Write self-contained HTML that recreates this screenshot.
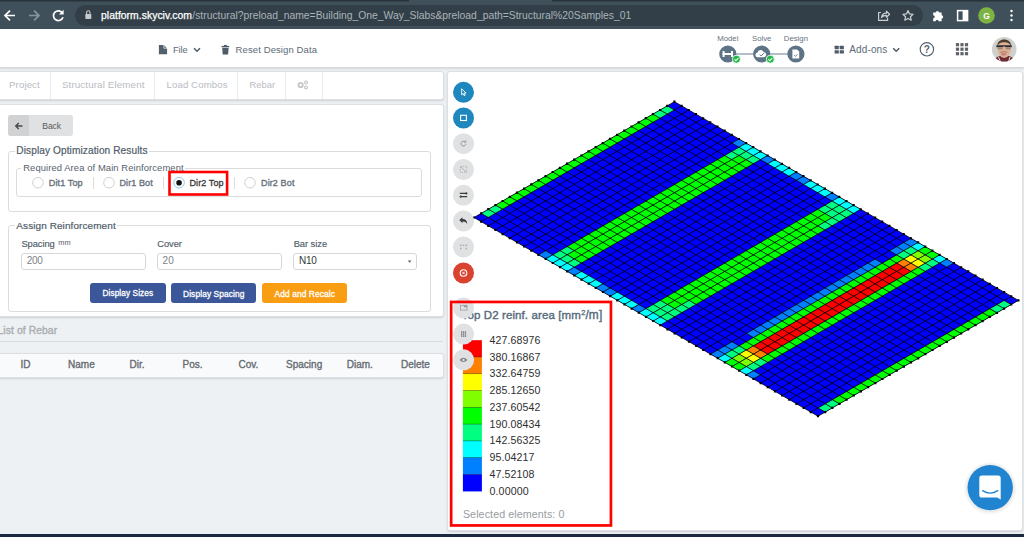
<!DOCTYPE html>
<html lang="en"><head><meta charset="utf-8"><title>SkyCiv Structural 3D</title>
<style>
html,body{margin:0;padding:0}
body{width:1024px;height:537px;overflow:hidden;position:relative;background:#eef1f4;font-family:"Liberation Sans",sans-serif;}
.t{position:absolute;white-space:nowrap;display:block}
.a{position:absolute;box-sizing:border-box}
.card{position:absolute;box-sizing:border-box;background:#fff;border:1px solid #dde0e3;border-radius:3px;box-shadow:0 1px 2px rgba(34,36,38,.15)}
.fs{position:absolute;box-sizing:border-box;border:1px solid #dcdcdc;border-radius:3px}
.lg{position:absolute;background:#fff}
.inp{position:absolute;box-sizing:border-box;border:1px solid #d6d7d8;border-radius:3px;background:#fff}
.btn{position:absolute;box-sizing:border-box;border-radius:3px}
.cb{position:absolute;width:21px;height:21px;border-radius:50%;box-sizing:border-box}
.rad{position:absolute;width:11.5px;height:11.5px;border-radius:50%;box-sizing:border-box;border:1px solid #d0d1d2;background:#fff}
svg{position:absolute;overflow:visible}
</style></head><body>

<div class="a" style="left:0;top:0;width:1024px;height:29px;background:#40505b"></div>
<svg style="left:0;top:0" width="1024" height="2" viewBox="0 0 1024 2"><rect x="0" y="0" width="409" height="1.500" fill="#27323a"/><rect x="552" y="0" width="472" height="1.500" fill="#27323a"/></svg>
<div class="a" style="left:75px;top:5px;width:848px;height:21px;border-radius:10.5px;background:#323f48"></div>
<svg style="left:0;top:0" width="1024" height="29" viewBox="0 0 1024 29">
<g fill="none" stroke="#fff" stroke-width="1.7" stroke-linecap="butt" stroke-linejoin="miter">
<path d="M15 15.5H5.5M10 10.6L5 15.5L10 20.4"/>
<path d="M29 15.5H38.5M34 10.6L39 15.5L34 20.4" stroke="#8a959c"/>
<path d="M62.6 13.2A4.9 4.9 0 1 0 63 17.3" />
</g>
<path d="M63.6 9.8V14.4H59z" fill="#fff"/>
<g fill="#c3c9cd"><rect x="85.3" y="14" width="6" height="5" rx="0.8"/></g>
<path d="M86.6 14v-1.6a1.7 1.7 0 0 1 3.4 0V14" fill="none" stroke="#c3c9cd" stroke-width="1.1"/>
<!-- share -->
<g fill="none" stroke="#c9cfd3" stroke-width="1.2" stroke-linejoin="round" stroke-linecap="round">
<path d="M880.5 12.5H878.6V20.4H887.6V18.2"/>
<path d="M881.5 17.5C882 14.6 884 13.3 886.4 13.2V11.2L889.6 14.2L886.4 17.2V15.3C884.3 15.3 882.7 16 881.5 17.5z"/>
<path d="M908 10.6L909.5 13.9L913.1 14.3L910.4 16.7L911.2 20.2L908 18.4L904.8 20.2L905.6 16.7L902.9 14.3L906.5 13.9z"/>
</g>
<!-- puzzle -->
<path d="M933.2 12.6h2.6a1.6 1.6 0 1 1 3.2 0h2.6v2.7a1.6 1.6 0 1 1 0 3.2v2.7h-3a1.5 1.5 0 1 0-3 0h-2.4v-2.9a1.5 1.5 0 1 0 0-3z" fill="#fff"/>
<!-- split -->
<rect x="957.6" y="10.6" width="10" height="10" fill="none" stroke="#fff" stroke-width="1.5"/>
<rect x="962.6" y="10.6" width="5" height="10" fill="#fff"/>
<circle cx="986.5" cy="15.5" r="8.3" fill="#7cb342"/>
<g fill="#fff"><circle cx="1011.5" cy="11" r="1.2"/><circle cx="1011.5" cy="15.5" r="1.2"/><circle cx="1011.5" cy="20" r="1.2"/></g>
</svg>
<span class="t" style="left:101.00px;top:8.50px;font-size:10.37px;line-height:14px;color:#ffffff;-webkit-text-stroke:0.25px #ffffff;letter-spacing:0.045px;">platform.skyciv.com</span>
<span class="t" style="left:192.30px;top:8.50px;font-size:10.37px;line-height:14px;color:#aab3b9;letter-spacing:-0.007px;">/structural?preload_name=Building_One_Way_Slabs&amp;preload_path=Structural%20Samples_01</span>
<span class="t" style="left:986.50px;top:8.70px;font-size:8.50px;line-height:14px;color:#fff;font-weight:700;transform:translateX(-50%);">G</span>
<div class="a" style="left:0;top:29px;width:1024px;height:39px;background:#fff;border-bottom:1px solid #d5d9dd;box-shadow:0 1px 2px rgba(0,0,0,.10)"></div>
<svg style="left:0;top:29px" width="1024" height="40" viewBox="0 29 1024 40">
<!-- file icon -->
<path d="M158.900 44.900h4.800l3.400 3.400v5.900h-8.200z" fill="#52616d"/><path d="M163.900 44.700v3.500h3.500" fill="none" stroke="#fff" stroke-width="0.700"/>
<path d="M194 48.3l3 3l3-3" fill="none" stroke="#4d5c68" stroke-width="1.5"/>
<!-- trash -->
<path d="M222.2 47.8h6.4l-.5 6.6h-5.4z" fill="#4d5c68"/><rect x="221.6" y="45.9" width="7.6" height="1.3" fill="#4d5c68"/><rect x="224" y="44.9" width="2.8" height="1.2" fill="#4d5c68"/>
<!-- model/solve/design -->
<path d="M728 54H796" stroke="#6b8193" stroke-width="1.2"/>
<g fill="#5d7486"><circle cx="727.8" cy="54" r="8.6"/><circle cx="761.7" cy="54" r="8.6"/><circle cx="795.9" cy="54" r="8.6"/></g>
<g fill="#fff">
<rect x="722.6" y="53" width="10.4" height="2" /><rect x="722.6" y="51" width="2" height="6"/><rect x="731" y="51" width="2" height="6"/>
<path d="M757.2 57.2a2.4 2.4 0 0 1 .3-4.7a3.2 3.2 0 0 1 6.1-.6a2.7 2.7 0 0 1 .6 5.3z"/>
<path d="M792.4 49.4h4.6l2.2 2.2v7h-6.8z"/>
</g>
<path d="M759.8 54.6l1.4 1.4l2.6-2.8" fill="none" stroke="#5d7486" stroke-width="1"/>
<path d="M794.3 55.2l1.2 1.2l2-2.2" fill="none" stroke="#5d7486" stroke-width="0.9"/>
<g><circle cx="736.4" cy="59.2" r="4" fill="#21ba45" stroke="#fff" stroke-width="0.8"/><circle cx="770.3" cy="59.2" r="4" fill="#21ba45" stroke="#fff" stroke-width="0.8"/>
<path d="M734.5 59.3l1.4 1.4l2.5-2.7M768.4 59.3l1.4 1.4l2.5-2.7" fill="none" stroke="#fff" stroke-width="1.1"/></g>
<!-- addons -->
<g fill="#4d5c68"><rect x="834.600" y="45.800" width="4.200" height="3.400" rx=".4"/><rect x="839.700" y="45.800" width="4.200" height="3.400" rx=".4"/><rect x="834.600" y="50.200" width="4.200" height="3.400" rx=".4"/><rect x="839.700" y="50.200" width="4.200" height="3.400" rx=".4"/></g>
<path d="M893.2 48.3l3 3l3-3" fill="none" stroke="#4d5c68" stroke-width="1.5"/>
<circle cx="926.9" cy="49.3" r="6.700" fill="none" stroke="#55636f" stroke-width="1.200"/>
<g fill="#5f6368">
<rect x="955.9" y="43.1" width="3.200" height="3.200"/><rect x="960.4" y="43.1" width="3.200" height="3.200"/><rect x="964.9" y="43.1" width="3.200" height="3.200"/><rect x="955.9" y="47.6" width="3.200" height="3.200"/><rect x="960.4" y="47.6" width="3.200" height="3.200"/><rect x="964.9" y="47.6" width="3.200" height="3.200"/><rect x="955.9" y="52.1" width="3.200" height="3.200"/><rect x="960.4" y="52.1" width="3.200" height="3.200"/><rect x="964.9" y="52.1" width="3.200" height="3.200"/>
</g>
<!-- avatar -->
<clipPath id="av"><circle cx="1004.2" cy="49.2" r="12.3"/></clipPath>
<g clip-path="url(#av)"><rect x="990" y="36" width="30" height="28" fill="#cdd0cc"/>
<path d="M993 64q1-7 7-8h8.600q6 1 7 8z" fill="#6e2b36"/>
<path d="M998.500 57l2.500 6M1010 57l-2 6" stroke="#e8e0dc" stroke-width="1"/>
<ellipse cx="1004.2" cy="48.6" rx="6.700" ry="9.300" fill="#dcb194"/>
<path d="M997.300 46.500c-.8-9.500 14.600-9.500 13.800 0c-1.200-5.600-12.600-5.600-13.800 0z" fill="#4b3b31"/>
<path d="M996.400 45.300h15.400v1.900h-6.200l-.8-.8h-1.500l-.8.800h-6.100z" fill="#2b2a36"/>
<rect x="997.600" y="48.400" width="5" height=".8" fill="#4a4656" opacity=".7"/><rect x="1005.600" y="48.400" width="5" height=".8" fill="#4a4656" opacity=".7"/>
<ellipse cx="1003.600" cy="54.300" rx="2.700" ry="1.300" fill="#c77b82"/>
<path d="M1000.300 52.300q3.500-1.400 7 0" fill="none" stroke="#8a5f4c" stroke-width=".7"/>
</g>
</svg>
<span class="t" style="left:172.90px;top:42.50px;font-size:9.36px;line-height:14px;color:#5c6b77;letter-spacing:-0.054px;">File</span>
<span class="t" style="left:235.60px;top:42.50px;font-size:9.52px;line-height:14px;color:#5c6b77;letter-spacing:0.095px;">Reset Design Data</span>
<span class="t" style="left:727.80px;top:34.00px;font-size:7.80px;line-height:10px;color:#66737e;transform:translateX(-50%);">Model</span>
<span class="t" style="left:761.70px;top:34.00px;font-size:7.80px;line-height:10px;color:#66737e;transform:translateX(-50%);">Solve</span>
<span class="t" style="left:795.90px;top:34.00px;font-size:7.80px;line-height:10px;color:#66737e;transform:translateX(-50%);">Design</span>
<span class="t" style="left:849.30px;top:42.90px;font-size:10.04px;line-height:14px;color:#5c6b77;letter-spacing:0.104px;">Add-ons</span>
<span class="t" style="left:926.90px;top:42.70px;font-size:10.00px;line-height:14px;color:#55636f;font-weight:700;transform:translateX(-50%);">?</span>
<div class="card" style="left:-4px;top:71px;width:447.8px;height:29px"></div>
<div class="a" style="left:50.0px;top:72px;width:1px;height:27px;background:#e9eaeb"></div>
<div class="a" style="left:154.0px;top:72px;width:1px;height:27px;background:#e9eaeb"></div>
<div class="a" style="left:237.0px;top:72px;width:1px;height:27px;background:#e9eaeb"></div>
<div class="a" style="left:285.0px;top:72px;width:1px;height:27px;background:#e9eaeb"></div>
<div class="a" style="left:322.0px;top:72px;width:1px;height:27px;background:#e9eaeb"></div>
<span class="t" style="left:9.10px;top:78.00px;font-size:9.65px;line-height:14px;color:#b9bcbf;letter-spacing:0.105px;">Project</span>
<span class="t" style="left:61.90px;top:78.00px;font-size:9.85px;line-height:14px;color:#b9bcbf;letter-spacing:0.095px;">Structural Element</span>
<span class="t" style="left:166.50px;top:78.00px;font-size:9.65px;line-height:14px;color:#b9bcbf;letter-spacing:0.106px;">Load Combos</span>
<span class="t" style="left:249.50px;top:78.00px;font-size:9.36px;line-height:14px;color:#b9bcbf;letter-spacing:0.012px;">Rebar</span>
<svg style="left:297px;top:80px" width="12" height="10" viewBox="0 0 12 10"><g fill="#c4c6c9"><circle cx="3.6" cy="5" r="3.1"/><circle cx="9" cy="2.6" r="2"/><circle cx="9" cy="7.4" r="2"/></g><g fill="#fff"><circle cx="3.6" cy="5" r="1.2"/><circle cx="9" cy="2.6" r=".8"/><circle cx="9" cy="7.400" r=".8"/></g></svg>
<div class="card" style="left:-4px;top:103.9px;width:447.8px;height:213px"></div>
<div class="btn" style="left:8px;top:115px;width:65px;height:21px;background:#e0e1e2"></div>
<div class="btn" style="left:8px;top:115px;width:21px;height:21px;background:#d1d2d3;border-radius:3px 0 0 3px"></div>
<svg style="left:13.6px;top:120.6px" width="10" height="10" viewBox="0 0 10 10"><path d="M8.5 5H2M4.800 2L1.800 5L4.800 8" fill="none" stroke="#4a4a4a" stroke-width="1.5"/></svg>
<span class="t" style="left:42.20px;top:118.70px;font-size:8.64px;line-height:14px;color:#5a5a5a;letter-spacing:-0.062px;">Back</span>
<div class="fs" style="left:8px;top:151px;width:423px;height:61px"></div>
<div class="lg" style="left:15px;top:145px;width:134px;height:12px"></div>
<span class="t" style="left:16.30px;top:144.30px;font-size:10.11px;line-height:14px;color:#4f5d6a;-webkit-text-stroke:0.20px #4f5d6a;letter-spacing:0.101px;">Display Optimization Results</span>
<div class="fs" style="left:16px;top:168px;width:405.5px;height:28.5px"></div>
<div class="lg" style="left:21px;top:163px;width:164px;height:10px"></div>
<span class="t" style="left:23.20px;top:160.80px;font-size:9.41px;line-height:14px;color:#56626d;letter-spacing:0.089px;">Required Area of Main Reinforcement</span>
<svg style="left:0;top:0" width="1024" height="537" viewBox="0 0 1024 537"><circle cx="38.00" cy="182.700" r="5.300" fill="#fff" stroke="#d0d1d2" stroke-width="1"/></svg>
<span class="t" style="left:48.70px;top:176.20px;font-size:9.13px;line-height:14px;color:#69737c;-webkit-text-stroke:0.35px #69737c;letter-spacing:0.098px;">Dit1 Top</span>
<div class="a" style="left:93px;top:177px;width:1px;height:12px;background:#dcdcdc"></div>
<svg style="left:0;top:0" width="1024" height="537" viewBox="0 0 1024 537"><circle cx="109.00" cy="182.700" r="5.300" fill="#fff" stroke="#d0d1d2" stroke-width="1"/></svg>
<span class="t" style="left:119.50px;top:176.20px;font-size:9.00px;line-height:14px;color:#69737c;-webkit-text-stroke:0.35px #69737c;letter-spacing:0.098px;">Dir1 Bot</span>
<div class="a" style="left:163px;top:177px;width:1px;height:12px;background:#dcdcdc"></div>
<svg style="left:0;top:0" width="1024" height="537" viewBox="0 0 1024 537"><circle cx="179.05" cy="182.700" r="5.300" fill="#fff" stroke="#96c8e6" stroke-width="1"/></svg>
<svg style="left:0;top:0" width="1024" height="537" viewBox="0 0 1024 537"><circle cx="179.05" cy="182.700" r="2.800" fill="#111"/></svg>
<span class="t" style="left:189.50px;top:176.20px;font-size:8.99px;line-height:14px;color:#3a3a3a;-webkit-text-stroke:0.30px #3a3a3a;letter-spacing:0.100px;">Dir2 Top</span>
<div class="a" style="left:234px;top:177px;width:1px;height:12px;background:#dcdcdc"></div>
<svg style="left:0;top:0" width="1024" height="537" viewBox="0 0 1024 537"><circle cx="250.00" cy="182.700" r="5.300" fill="#fff" stroke="#d0d1d2" stroke-width="1"/></svg>
<span class="t" style="left:261.00px;top:176.20px;font-size:9.06px;line-height:14px;color:#69737c;-webkit-text-stroke:0.35px #69737c;letter-spacing:0.102px;">Dir2 Bot</span>
<svg style="left:0;top:0" width="1024" height="537" viewBox="0 0 1024 537"><rect x="169.5" y="172" width="57.6" height="22.5" fill="none" stroke="#ff0000" stroke-width="2.6"/></svg>
<div class="fs" style="left:8px;top:225px;width:423px;height:87px"></div>
<div class="lg" style="left:15px;top:219px;width:102px;height:12px"></div>
<span class="t" style="left:16.30px;top:218.50px;font-size:9.97px;line-height:14px;color:#4f5d6a;-webkit-text-stroke:0.20px #4f5d6a;letter-spacing:0.098px;">Assign Reinforcement</span>
<span class="t" style="left:21.40px;top:237.30px;font-size:9.36px;line-height:14px;color:#4f5d6a;-webkit-text-stroke:0.15px #4f5d6a;letter-spacing:-0.064px;">Spacing</span>
<span class="t" style="left:58.30px;top:238.50px;font-size:7.33px;line-height:8px;color:#4f5d6a;letter-spacing:0.081px;">mm</span>
<span class="t" style="left:157.30px;top:237.30px;font-size:9.36px;line-height:14px;color:#4f5d6a;-webkit-text-stroke:0.15px #4f5d6a;letter-spacing:-0.084px;">Cover</span>
<span class="t" style="left:293.70px;top:237.30px;font-size:9.36px;line-height:14px;color:#4f5d6a;-webkit-text-stroke:0.15px #4f5d6a;letter-spacing:-0.052px;">Bar size</span>
<div class="inp" style="left:21.4px;top:253.1px;width:124.3px;height:17.2px"></div>
<div class="inp" style="left:157.3px;top:253.1px;width:124.7px;height:17.2px"></div>
<div class="inp" style="left:293.4px;top:253.1px;width:123.9px;height:17.2px"></div>
<span class="t" style="left:26.70px;top:254.40px;font-size:10.00px;line-height:14px;color:#7d8186;letter-spacing:-0.244px;">200</span>
<span class="t" style="left:162.60px;top:254.40px;font-size:10.00px;line-height:14px;color:#7d8186;letter-spacing:0.075px;">20</span>
<span class="t" style="left:299.00px;top:254.10px;font-size:10.00px;line-height:14px;color:#363636;letter-spacing:-0.280px;">N10</span>
<svg style="left:407.2px;top:260.2px" width="5.2" height="3.2" viewBox="0 0 6 4"><path d="M.6.600h4.800L3 3.400z" fill="#666"/></svg>
<div class="btn" style="left:90px;top:282.6px;width:75.7px;height:20.9px;background:#3b5699"></div>
<div class="btn" style="left:170.500px;top:282.6px;width:85.7px;height:20.9px;background:#3b5699"></div>
<div class="btn" style="left:262.300px;top:282.6px;width:85px;height:20.9px;background:#f99d12"></div>
<span class="t" style="left:102.50px;top:286.50px;font-size:8.23px;line-height:14px;color:#fff;-webkit-text-stroke:0.30px #fff;letter-spacing:0.105px;">Display Sizes</span>
<span class="t" style="left:183.00px;top:286.50px;font-size:8.39px;line-height:14px;color:#fff;-webkit-text-stroke:0.30px #fff;letter-spacing:0.103px;">Display Spacing</span>
<span class="t" style="left:274.50px;top:286.50px;font-size:8.40px;line-height:14px;color:#fff;-webkit-text-stroke:0.30px #fff;letter-spacing:0.105px;">Add and Recalc</span>
<span class="t" style="left:-2.50px;top:324.20px;font-size:10.30px;line-height:14px;color:#a9adb1;-webkit-text-stroke:0.35px #a9adb1;letter-spacing:0.101px;">List of Rebar</span>
<div class="a" style="left:0;top:341px;width:443px;height:1px;background:#d8dadd"></div>
<div class="card" style="left:-4px;top:352.500px;width:447.5px;height:25px;border-radius:0 3px 3px 0;background:#f9fafb"></div>
<span class="t" style="left:25.60px;top:357.50px;font-size:10.00px;line-height:14px;color:#666c73;-webkit-text-stroke:0.35px #666c73;transform:translateX(-50%);">ID</span>
<span class="t" style="left:81.40px;top:357.50px;font-size:10.00px;line-height:14px;color:#666c73;-webkit-text-stroke:0.35px #666c73;transform:translateX(-50%);">Name</span>
<span class="t" style="left:137.10px;top:357.50px;font-size:10.00px;line-height:14px;color:#666c73;-webkit-text-stroke:0.35px #666c73;transform:translateX(-50%);">Dir.</span>
<span class="t" style="left:192.60px;top:357.50px;font-size:10.00px;line-height:14px;color:#666c73;-webkit-text-stroke:0.35px #666c73;transform:translateX(-50%);">Pos.</span>
<span class="t" style="left:248.35px;top:357.50px;font-size:10.00px;line-height:14px;color:#666c73;-webkit-text-stroke:0.35px #666c73;transform:translateX(-50%);">Cov.</span>
<span class="t" style="left:304.15px;top:357.50px;font-size:10.00px;line-height:14px;color:#666c73;-webkit-text-stroke:0.35px #666c73;transform:translateX(-50%);">Spacing</span>
<span class="t" style="left:359.75px;top:357.50px;font-size:10.00px;line-height:14px;color:#666c73;-webkit-text-stroke:0.35px #666c73;transform:translateX(-50%);">Diam.</span>
<span class="t" style="left:415.45px;top:357.50px;font-size:10.00px;line-height:14px;color:#666c73;-webkit-text-stroke:0.35px #666c73;transform:translateX(-50%);">Delete</span>
<div class="card" style="left:447.3px;top:71px;width:576.2px;height:459.5px"></div>
<svg style="left:0;top:0" width="1024" height="537" viewBox="0 0 1024 537" shape-rendering="auto">
<polygon points="674.4,101.7 1018.4,300.4 818.0,416.2 474.0,217.5" fill="#0000ff"/>
<polygon points="667.2,105.8 674.4,110.0 660.1,118.2 652.9,114.1" fill="#00ff80"/>
<polygon points="652.9,114.1 660.1,118.2 502.6,209.2 495.5,205.1" fill="#00ff00"/>
<polygon points="495.5,205.1 502.6,209.2 488.3,217.5 481.2,213.4" fill="#00ff80"/>
<polygon points="738.9,139.0 746.1,143.1 738.9,147.2 731.7,143.1" fill="#0080ff"/>
<polygon points="545.7,250.6 552.8,254.8 545.7,258.9 538.5,254.8" fill="#0080ff"/>
<polygon points="746.1,143.1 753.2,147.2 746.1,151.4 738.9,147.2" fill="#00ffff"/>
<polygon points="738.9,147.2 746.1,151.4 731.8,159.6 724.6,155.5" fill="#00ff80"/>
<polygon points="724.6,155.5 731.8,159.6 574.3,250.6 567.1,246.5" fill="#00ff00"/>
<polygon points="567.1,246.5 574.3,250.6 560.0,258.9 552.8,254.8" fill="#00ff80"/>
<polygon points="552.8,254.8 560.0,258.9 552.8,263.0 545.7,258.9" fill="#00ffff"/>
<polygon points="753.2,147.2 760.4,151.4 753.2,155.5 746.1,151.4" fill="#00ffff"/>
<polygon points="746.1,151.4 753.2,155.5 746.1,159.6 738.9,155.5" fill="#00ff80"/>
<polygon points="738.9,155.5 746.1,159.6 574.3,258.9 567.1,254.8" fill="#00ff00"/>
<polygon points="567.1,254.8 574.3,258.9 567.2,263.0 560.0,258.9" fill="#00ff80"/>
<polygon points="560.0,258.9 567.2,263.0 560.0,267.2 552.8,263.0" fill="#00ffff"/>
<polygon points="760.4,151.4 767.6,155.5 760.4,159.7 753.2,155.5" fill="#00ffff"/>
<polygon points="753.2,155.5 760.4,159.7 753.3,163.8 746.1,159.6" fill="#00ff80"/>
<polygon points="746.1,159.6 753.3,163.8 581.5,263.0 574.3,258.9" fill="#00ff00"/>
<polygon points="574.3,258.9 581.5,263.0 574.3,267.2 567.2,263.0" fill="#00ff80"/>
<polygon points="567.2,263.0 574.3,267.2 567.2,271.3 560.0,267.2" fill="#00ffff"/>
<polygon points="767.6,155.5 774.7,159.7 767.6,163.8 760.4,159.7" fill="#0080ff"/>
<polygon points="574.3,267.2 581.5,271.3 574.3,275.5 567.2,271.3" fill="#0080ff"/>
<polygon points="774.7,159.7 781.9,163.8 774.7,167.9 767.6,163.8" fill="#00ffff"/>
<polygon points="581.5,271.3 588.7,275.5 581.5,279.6 574.3,275.5" fill="#00ffff"/>
<polygon points="781.9,163.8 789.1,167.9 781.9,172.1 774.7,167.9" fill="#00ffff"/>
<polygon points="588.7,275.5 595.8,279.6 588.7,283.7 581.5,279.6" fill="#00ffff"/>
<polygon points="789.1,167.9 796.2,172.1 789.1,176.2 781.9,172.1" fill="#00ffff"/>
<polygon points="595.8,279.6 603.0,283.7 595.8,287.9 588.7,283.7" fill="#00ffff"/>
<polygon points="796.2,172.1 803.4,176.2 796.2,180.3 789.1,176.2" fill="#0080ff"/>
<polygon points="603.0,283.7 610.2,287.9 603.0,292.0 595.8,287.9" fill="#0080ff"/>
<polygon points="803.4,176.2 810.6,180.4 803.4,184.5 796.2,180.3" fill="#0080ff"/>
<polygon points="610.2,287.9 617.3,292.0 610.2,296.2 603.0,292.0" fill="#0080ff"/>
<polygon points="810.6,180.4 817.7,184.5 810.6,188.6 803.4,184.5" fill="#00ffff"/>
<polygon points="617.3,292.0 624.5,296.2 617.3,300.3 610.2,296.2" fill="#00ffff"/>
<polygon points="817.7,184.5 824.9,188.6 817.7,192.8 810.6,188.6" fill="#00ffff"/>
<polygon points="624.5,296.2 631.7,300.3 624.5,304.4 617.3,300.3" fill="#00ffff"/>
<polygon points="824.9,188.6 832.1,192.8 824.9,196.9 817.7,192.8" fill="#00ffff"/>
<polygon points="631.7,300.3 638.8,304.4 631.7,308.6 624.5,304.4" fill="#00ffff"/>
<polygon points="832.1,192.8 839.2,196.9 832.1,201.0 824.9,196.9" fill="#0080ff"/>
<polygon points="638.8,304.4 646.0,308.6 638.8,312.7 631.7,308.6" fill="#0080ff"/>
<polygon points="839.2,196.9 846.4,201.1 839.2,205.2 832.1,201.0" fill="#00ffff"/>
<polygon points="832.1,201.0 839.2,205.2 824.9,213.5 817.8,209.3" fill="#00ff80"/>
<polygon points="817.8,209.3 824.9,213.5 667.5,304.4 660.3,300.3" fill="#00ff00"/>
<polygon points="660.3,300.3 667.5,304.4 653.2,312.7 646.0,308.6" fill="#00ff80"/>
<polygon points="646.0,308.6 653.2,312.7 646.0,316.9 638.8,312.7" fill="#00ffff"/>
<polygon points="846.4,201.1 853.6,205.2 846.4,209.3 839.2,205.2" fill="#00ffff"/>
<polygon points="839.2,205.2 846.4,209.3 832.1,217.6 824.9,213.5" fill="#00ff80"/>
<polygon points="824.9,213.5 832.1,217.6 674.6,308.6 667.5,304.4" fill="#00ff00"/>
<polygon points="667.5,304.4 674.6,308.6 660.3,316.9 653.2,312.7" fill="#00ff80"/>
<polygon points="653.2,312.7 660.3,316.9 653.2,321.0 646.0,316.9" fill="#00ffff"/>
<polygon points="853.6,205.2 860.7,209.3 853.6,213.5 846.4,209.3" fill="#00ffff"/>
<polygon points="846.4,209.3 853.6,213.5 824.9,230.0 817.8,225.9" fill="#00ff80"/>
<polygon points="817.8,225.9 824.9,230.0 696.1,304.5 689.0,300.3" fill="#00ff00"/>
<polygon points="689.0,300.3 696.1,304.5 667.5,321.0 660.3,316.9" fill="#00ff80"/>
<polygon points="660.3,316.9 667.5,321.0 660.3,325.1 653.2,321.0" fill="#00ffff"/>
<polygon points="910.9,238.3 918.1,242.4 896.6,254.9 889.4,250.7" fill="#0080ff"/>
<polygon points="875.1,259.0 882.3,263.1 753.5,337.6 746.3,333.4" fill="#0080ff"/>
<polygon points="732.0,341.7 739.1,345.8 717.7,358.2 710.5,354.1" fill="#0080ff"/>
<polygon points="918.1,242.4 925.2,246.6 918.1,250.7 910.9,246.6" fill="#00ffff"/>
<polygon points="910.9,246.6 918.1,250.7 903.8,259.0 896.6,254.9" fill="#00ff80"/>
<polygon points="896.6,254.9 903.8,259.0 746.3,350.0 739.1,345.8" fill="#00ff00"/>
<polygon points="739.1,345.8 746.3,350.0 732.0,358.2 724.8,354.1" fill="#00ff80"/>
<polygon points="724.8,354.1 732.0,358.2 724.8,362.4 717.7,358.2" fill="#00ffff"/>
<polygon points="925.2,246.6 932.4,250.7 925.2,254.9 918.1,250.7" fill="#00ff00"/>
<polygon points="918.1,250.7 925.2,254.9 918.1,259.0 910.9,254.9" fill="#80ff00"/>
<polygon points="910.9,254.9 918.1,259.0 910.9,263.1 903.8,259.0" fill="#ffff00"/>
<polygon points="903.8,259.0 910.9,263.1 903.8,267.3 896.6,263.1" fill="#ff8000"/>
<polygon points="896.6,263.1 903.8,267.3 760.6,350.0 753.5,345.8" fill="#ff0000"/>
<polygon points="753.5,345.8 760.6,350.0 753.5,354.1 746.3,350.0" fill="#ff8000"/>
<polygon points="746.3,350.0 753.5,354.1 746.3,358.3 739.1,354.1" fill="#ffff00"/>
<polygon points="739.1,354.1 746.3,358.3 739.2,362.4 732.0,358.2" fill="#80ff00"/>
<polygon points="732.0,358.2 739.2,362.4 732.0,366.5 724.8,362.4" fill="#00ff00"/>
<polygon points="932.4,250.7 939.6,254.9 932.4,259.0 925.2,254.9" fill="#00ff00"/>
<polygon points="925.2,254.9 932.4,259.0 925.3,263.1 918.1,259.0" fill="#80ff00"/>
<polygon points="918.1,259.0 925.3,263.1 918.1,267.3 910.9,263.1" fill="#ffff00"/>
<polygon points="910.9,263.1 918.1,267.3 910.9,271.4 903.8,267.3" fill="#ff8000"/>
<polygon points="903.8,267.3 910.9,271.4 767.8,354.1 760.6,350.0" fill="#ff0000"/>
<polygon points="760.6,350.0 767.8,354.1 760.6,358.3 753.5,354.1" fill="#ff8000"/>
<polygon points="753.5,354.1 760.6,358.3 753.5,362.4 746.3,358.3" fill="#ffff00"/>
<polygon points="746.3,358.3 753.5,362.4 746.3,366.5 739.2,362.4" fill="#80ff00"/>
<polygon points="739.2,362.4 746.3,366.5 739.2,370.7 732.0,366.5" fill="#00ff00"/>
<polygon points="939.6,254.9 946.7,259.0 939.6,263.1 932.4,259.0" fill="#00ffff"/>
<polygon points="932.4,259.0 939.6,263.1 925.3,271.4 918.1,267.3" fill="#00ff80"/>
<polygon points="918.1,267.3 925.3,271.4 767.8,362.4 760.6,358.3" fill="#00ff00"/>
<polygon points="760.6,358.3 767.8,362.4 753.5,370.7 746.3,366.5" fill="#00ff80"/>
<polygon points="746.3,366.5 753.5,370.7 746.3,374.8 739.2,370.7" fill="#00ffff"/>
<polygon points="946.7,259.0 953.9,263.1 946.7,267.3 939.6,263.1" fill="#0080ff"/>
<polygon points="753.5,370.7 760.7,374.8 753.5,378.9 746.3,374.8" fill="#0080ff"/>
<polygon points="1004.1,300.4 1011.2,304.5 996.9,312.8 989.8,308.7" fill="#00ff80"/>
<polygon points="989.8,308.7 996.9,312.8 839.5,403.8 832.3,399.7" fill="#00ff00"/>
<polygon points="832.3,399.7 839.5,403.8 825.2,412.1 818.0,407.9" fill="#00ff80"/>
<path d="M674.4 101.7L474.0 217.5M681.6 105.8L481.2 221.6M688.7 110.0L488.3 225.8M695.9 114.1L495.5 229.9M703.1 118.3L502.7 234.1M710.2 122.4L509.8 238.2M717.4 126.5L517.0 242.3M724.6 130.7L524.2 246.5M731.7 134.8L531.3 250.6M738.9 139.0L538.5 254.8M746.1 143.1L545.7 258.9M753.2 147.2L552.8 263.0M760.4 151.4L560.0 267.2M767.6 155.5L567.2 271.3M774.7 159.7L574.3 275.5M781.9 163.8L581.5 279.6M789.1 167.9L588.7 283.7M796.2 172.1L595.8 287.9M803.4 176.2L603.0 292.0M810.6 180.4L610.2 296.2M817.7 184.5L617.3 300.3M824.9 188.6L624.5 304.4M832.1 192.8L631.7 308.6M839.2 196.9L638.8 312.7M846.4 201.1L646.0 316.9M853.6 205.2L653.2 321.0M860.7 209.3L660.3 325.1M867.9 213.5L667.5 329.3M875.1 217.6L674.7 333.4M882.2 221.7L681.8 337.5M889.4 225.9L689.0 341.7M896.6 230.0L696.2 345.8M903.7 234.2L703.3 350.0M910.9 238.3L710.5 354.1M918.1 242.4L717.7 358.2M925.2 246.6L724.8 362.4M932.4 250.7L732.0 366.5M939.6 254.9L739.2 370.7M946.7 259.0L746.3 374.8M953.9 263.1L753.5 378.9M961.1 267.3L760.7 383.1M968.2 271.4L767.8 387.2M975.4 275.6L775.0 391.4M982.6 279.7L782.2 395.5M989.7 283.8L789.3 399.6M996.9 288.0L796.5 403.8M1004.1 292.1L803.7 407.9M1011.2 296.3L810.8 412.1M1018.4 300.4L818.0 416.2M674.4 101.7L1018.4 300.4M667.2 105.8L1011.2 304.5M660.1 110.0L1004.1 308.7M652.9 114.1L996.9 312.8M645.8 118.2L989.8 316.9M638.6 122.4L982.6 321.1M631.5 126.5L975.5 325.2M624.3 130.7L968.3 329.3M617.1 134.8L961.1 333.5M610.0 138.9L954.0 337.6M602.8 143.1L946.8 341.8M595.7 147.2L939.7 345.9M588.5 151.3L932.5 350.0M581.4 155.5L925.4 354.2M574.2 159.6L918.2 358.3M567.0 163.7L911.0 362.4M559.9 167.9L903.9 366.6M552.7 172.0L896.7 370.7M545.6 176.1L889.6 374.8M538.4 180.3L882.4 379.0M531.3 184.4L875.3 383.1M524.1 188.6L868.1 387.2M516.9 192.7L860.9 391.4M509.8 196.8L853.8 395.5M502.6 201.0L846.6 399.7M495.5 205.1L839.5 403.8M488.3 209.2L832.3 407.9M481.2 213.4L825.2 412.1M474.0 217.5L818.0 416.2" stroke="#000" stroke-width="0.8" fill="none"/>
<path d="M673.3 100.6h2.2v2.2h-2.2zM680.5 104.7h2.2v2.2h-2.2zM687.6 108.9h2.2v2.2h-2.2zM694.8 113.0h2.2v2.2h-2.2zM702.0 117.2h2.2v2.2h-2.2zM709.1 121.3h2.2v2.2h-2.2zM716.3 125.4h2.2v2.2h-2.2zM723.5 129.6h2.2v2.2h-2.2zM730.6 133.7h2.2v2.2h-2.2zM737.8 137.9h2.2v2.2h-2.2zM745.0 142.0h2.2v2.2h-2.2zM752.1 146.1h2.2v2.2h-2.2zM759.3 150.3h2.2v2.2h-2.2zM766.5 154.4h2.2v2.2h-2.2zM773.6 158.6h2.2v2.2h-2.2zM780.8 162.7h2.2v2.2h-2.2zM788.0 166.8h2.2v2.2h-2.2zM795.1 171.0h2.2v2.2h-2.2zM802.3 175.1h2.2v2.2h-2.2zM809.5 179.3h2.2v2.2h-2.2zM816.6 183.4h2.2v2.2h-2.2zM823.8 187.5h2.2v2.2h-2.2zM831.0 191.7h2.2v2.2h-2.2zM838.1 195.8h2.2v2.2h-2.2zM845.3 200.0h2.2v2.2h-2.2zM852.5 204.1h2.2v2.2h-2.2zM859.6 208.2h2.2v2.2h-2.2zM866.8 212.4h2.2v2.2h-2.2zM874.0 216.5h2.2v2.2h-2.2zM881.1 220.6h2.2v2.2h-2.2zM888.3 224.8h2.2v2.2h-2.2zM895.5 228.9h2.2v2.2h-2.2zM902.6 233.1h2.2v2.2h-2.2zM909.8 237.2h2.2v2.2h-2.2zM917.0 241.3h2.2v2.2h-2.2zM924.1 245.5h2.2v2.2h-2.2zM931.3 249.6h2.2v2.2h-2.2zM938.5 253.8h2.2v2.2h-2.2zM945.6 257.9h2.2v2.2h-2.2zM952.8 262.0h2.2v2.2h-2.2zM960.0 266.2h2.2v2.2h-2.2zM967.1 270.3h2.2v2.2h-2.2zM974.3 274.5h2.2v2.2h-2.2zM981.5 278.6h2.2v2.2h-2.2zM988.6 282.7h2.2v2.2h-2.2zM995.8 286.9h2.2v2.2h-2.2zM1003.0 291.0h2.2v2.2h-2.2zM1010.1 295.2h2.2v2.2h-2.2zM1017.3 299.3h2.2v2.2h-2.2zM472.9 216.4h2.2v2.2h-2.2zM480.1 220.5h2.2v2.2h-2.2zM487.2 224.7h2.2v2.2h-2.2zM494.4 228.8h2.2v2.2h-2.2zM501.6 233.0h2.2v2.2h-2.2zM508.7 237.1h2.2v2.2h-2.2zM515.9 241.2h2.2v2.2h-2.2zM523.1 245.4h2.2v2.2h-2.2zM530.2 249.5h2.2v2.2h-2.2zM537.4 253.7h2.2v2.2h-2.2zM544.6 257.8h2.2v2.2h-2.2zM551.7 261.9h2.2v2.2h-2.2zM558.9 266.1h2.2v2.2h-2.2zM566.1 270.2h2.2v2.2h-2.2zM573.2 274.4h2.2v2.2h-2.2zM580.4 278.5h2.2v2.2h-2.2zM587.6 282.6h2.2v2.2h-2.2zM594.7 286.8h2.2v2.2h-2.2zM601.9 290.9h2.2v2.2h-2.2zM609.1 295.1h2.2v2.2h-2.2zM616.2 299.2h2.2v2.2h-2.2zM623.4 303.3h2.2v2.2h-2.2zM630.6 307.5h2.2v2.2h-2.2zM637.7 311.6h2.2v2.2h-2.2zM644.9 315.8h2.2v2.2h-2.2zM652.1 319.9h2.2v2.2h-2.2zM659.2 324.0h2.2v2.2h-2.2zM666.4 328.2h2.2v2.2h-2.2zM673.6 332.3h2.2v2.2h-2.2zM680.7 336.4h2.2v2.2h-2.2zM687.9 340.6h2.2v2.2h-2.2zM695.1 344.7h2.2v2.2h-2.2zM702.2 348.9h2.2v2.2h-2.2zM709.4 353.0h2.2v2.2h-2.2zM716.6 357.1h2.2v2.2h-2.2zM723.7 361.3h2.2v2.2h-2.2zM730.9 365.4h2.2v2.2h-2.2zM738.1 369.6h2.2v2.2h-2.2zM745.2 373.7h2.2v2.2h-2.2zM752.4 377.8h2.2v2.2h-2.2zM759.6 382.0h2.2v2.2h-2.2zM766.7 386.1h2.2v2.2h-2.2zM773.9 390.3h2.2v2.2h-2.2zM781.1 394.4h2.2v2.2h-2.2zM788.2 398.5h2.2v2.2h-2.2zM795.4 402.7h2.2v2.2h-2.2zM802.6 406.8h2.2v2.2h-2.2zM809.7 411.0h2.2v2.2h-2.2zM816.9 415.1h2.2v2.2h-2.2zM666.1 104.7h2.2v2.2h-2.2zM659.0 108.9h2.2v2.2h-2.2zM651.8 113.0h2.2v2.2h-2.2zM644.7 117.1h2.2v2.2h-2.2zM637.5 121.3h2.2v2.2h-2.2zM630.4 125.4h2.2v2.2h-2.2zM623.2 129.6h2.2v2.2h-2.2zM616.0 133.7h2.2v2.2h-2.2zM608.9 137.8h2.2v2.2h-2.2zM601.7 142.0h2.2v2.2h-2.2zM594.6 146.1h2.2v2.2h-2.2zM587.4 150.2h2.2v2.2h-2.2zM580.3 154.4h2.2v2.2h-2.2zM573.1 158.5h2.2v2.2h-2.2zM565.9 162.6h2.2v2.2h-2.2zM558.8 166.8h2.2v2.2h-2.2zM551.6 170.9h2.2v2.2h-2.2zM544.5 175.0h2.2v2.2h-2.2zM537.3 179.2h2.2v2.2h-2.2zM530.2 183.3h2.2v2.2h-2.2zM523.0 187.5h2.2v2.2h-2.2zM515.8 191.6h2.2v2.2h-2.2zM508.7 195.7h2.2v2.2h-2.2zM501.5 199.9h2.2v2.2h-2.2zM494.4 204.0h2.2v2.2h-2.2zM487.2 208.1h2.2v2.2h-2.2zM480.1 212.3h2.2v2.2h-2.2zM1010.1 303.4h2.2v2.2h-2.2zM1003.0 307.6h2.2v2.2h-2.2zM995.8 311.7h2.2v2.2h-2.2zM988.7 315.8h2.2v2.2h-2.2zM981.5 320.0h2.2v2.2h-2.2zM974.4 324.1h2.2v2.2h-2.2zM967.2 328.2h2.2v2.2h-2.2zM960.0 332.4h2.2v2.2h-2.2zM952.9 336.5h2.2v2.2h-2.2zM945.7 340.7h2.2v2.2h-2.2zM938.6 344.8h2.2v2.2h-2.2zM931.4 348.9h2.2v2.2h-2.2zM924.3 353.1h2.2v2.2h-2.2zM917.1 357.2h2.2v2.2h-2.2zM909.9 361.3h2.2v2.2h-2.2zM902.8 365.5h2.2v2.2h-2.2zM895.6 369.6h2.2v2.2h-2.2zM888.5 373.7h2.2v2.2h-2.2zM881.3 377.9h2.2v2.2h-2.2zM874.2 382.0h2.2v2.2h-2.2zM867.0 386.1h2.2v2.2h-2.2zM859.8 390.3h2.2v2.2h-2.2zM852.7 394.4h2.2v2.2h-2.2zM845.5 398.6h2.2v2.2h-2.2zM838.4 402.7h2.2v2.2h-2.2zM831.2 406.8h2.2v2.2h-2.2zM824.1 411.0h2.2v2.2h-2.2z" fill="#000"/>
</svg>
<span class="t" style="left:461.60px;top:308.40px;font-size:11.53px;line-height:14px;color:#586c7d;-webkit-text-stroke:0.40px #586c7d;letter-spacing:0.099px;">Top D2 reinf. area [mm</span>
<span class="t" style="left:581.20px;top:307.80px;font-size:7.40px;line-height:9px;color:#586c7d;-webkit-text-stroke:0.30px #586c7d;">2</span>
<span class="t" style="left:585.40px;top:308.40px;font-size:11.87px;line-height:14px;color:#586c7d;-webkit-text-stroke:0.40px #586c7d;letter-spacing:0.158px;">/m]</span>
<svg style="left:0;top:0" width="1024" height="537" viewBox="0 0 1024 537">
<rect x="462.900" y="340.20" width="19" height="16.98" fill="#ff0000"/>
<rect x="462.900" y="356.98" width="19" height="16.98" fill="#ff8000"/>
<rect x="462.900" y="373.76" width="19" height="16.98" fill="#ffff00"/>
<rect x="462.900" y="390.54" width="19" height="16.98" fill="#80ff00"/>
<rect x="462.900" y="407.32" width="19" height="16.98" fill="#00ff00"/>
<rect x="462.900" y="424.10" width="19" height="16.98" fill="#00ff80"/>
<rect x="462.900" y="440.88" width="19" height="16.98" fill="#00ffff"/>
<rect x="462.900" y="457.66" width="19" height="16.98" fill="#0080ff"/>
<rect x="462.900" y="474.44" width="19" height="16.98" fill="#0000ff"/>
<rect x="462.900" y="356.68" width="19" height="0.6" fill="rgba(0,0,0,.55)"/>
<rect x="462.900" y="373.46" width="19" height="0.6" fill="rgba(0,0,0,.55)"/>
<rect x="462.900" y="390.24" width="19" height="0.6" fill="rgba(0,0,0,.55)"/>
<rect x="462.900" y="407.02" width="19" height="0.6" fill="rgba(0,0,0,.55)"/>
<rect x="462.900" y="423.80" width="19" height="0.6" fill="rgba(0,0,0,.55)"/>
<rect x="462.900" y="440.58" width="19" height="0.6" fill="rgba(0,0,0,.55)"/>
<rect x="462.900" y="457.36" width="19" height="0.6" fill="rgba(0,0,0,.55)"/>
<rect x="462.900" y="474.14" width="19" height="0.6" fill="rgba(0,0,0,.55)"/>
</svg>
<span class="t" style="left:489.50px;top:332.80px;font-size:10.59px;line-height:14px;color:#2f2f2f;letter-spacing:0.098px;">427.68976</span>
<span class="t" style="left:489.50px;top:349.58px;font-size:10.59px;line-height:14px;color:#2f2f2f;letter-spacing:0.098px;">380.16867</span>
<span class="t" style="left:489.50px;top:366.36px;font-size:10.59px;line-height:14px;color:#2f2f2f;letter-spacing:0.098px;">332.64759</span>
<span class="t" style="left:489.50px;top:383.14px;font-size:10.59px;line-height:14px;color:#2f2f2f;letter-spacing:0.098px;">285.12650</span>
<span class="t" style="left:489.50px;top:399.92px;font-size:10.59px;line-height:14px;color:#2f2f2f;letter-spacing:0.098px;">237.60542</span>
<span class="t" style="left:489.50px;top:416.70px;font-size:10.59px;line-height:14px;color:#2f2f2f;letter-spacing:0.098px;">190.08434</span>
<span class="t" style="left:489.50px;top:433.48px;font-size:10.59px;line-height:14px;color:#2f2f2f;letter-spacing:0.098px;">142.56325</span>
<span class="t" style="left:489.50px;top:450.26px;font-size:10.62px;line-height:14px;color:#2f2f2f;letter-spacing:0.105px;">95.04217</span>
<span class="t" style="left:489.50px;top:467.04px;font-size:10.62px;line-height:14px;color:#2f2f2f;letter-spacing:0.105px;">47.52108</span>
<span class="t" style="left:489.50px;top:483.82px;font-size:10.68px;line-height:14px;color:#2f2f2f;letter-spacing:0.104px;">0.00000</span>
<span class="t" style="left:462.90px;top:507.20px;font-size:10.68px;line-height:14px;color:#979ca1;letter-spacing:0.096px;">Selected elements: 0</span>
<svg style="left:0;top:0" width="1024" height="537" viewBox="0 0 1024 537">
<circle cx="463.500" cy="92.3" r="10.500" fill="#1e87be"/>
<circle cx="463.500" cy="118.0" r="10.500" fill="#1e87be"/>
<circle cx="463.500" cy="143.7" r="10.500" fill="#e0e1e2"/>
<circle cx="463.500" cy="169.5" r="10.500" fill="#e0e1e2"/>
<circle cx="463.500" cy="195.3" r="10.500" fill="#e0e1e2"/>
<circle cx="463.500" cy="221.0" r="10.500" fill="#e0e1e2"/>
<circle cx="463.500" cy="247.0" r="10.500" fill="#e0e1e2"/>
<circle cx="463.500" cy="273.0" r="10.500" fill="#d8422f"/>
<circle cx="463.600" cy="308.0" r="10.500" fill="#e0e1e2"/>
<circle cx="463.600" cy="334.1" r="10.500" fill="#e0e1e2"/>
<circle cx="463.600" cy="359.8" r="10.500" fill="#e0e1e2"/>
</svg>
<svg style="left:0;top:0" width="1024" height="537" viewBox="0 0 1024 537">
<path d="M461.600 88.800v6l1.500-1.300l1.100 2.200l1-.5l-1.100-2.100h2z" fill="none" stroke="#fff" stroke-width="0.9" stroke-linejoin="round"/>
<rect x="460.600" y="115.300" width="5.800" height="5.200" fill="none" stroke="#fff" stroke-width="1.100"/>
<path d="M465.800 143.600a2.400 2.400 0 1 1-.9-1.900" fill="none" stroke="#8d8f91" stroke-width="0.9"/><path d="M465.900 140.300v1.800h-1.800" fill="none" stroke="#8d8f91" stroke-width="0.800"/>
<rect x="460.300" y="166.400" width="6.400" height="6" fill="none" stroke="#a5a7a9" stroke-width="0.800" stroke-dasharray="1.300 1"/><path d="M461 167l5 5" stroke="#a5a7a9" stroke-width="0.800"/>
<path d="M459.800 193.400h7.400M459.800 196.600h7.400" stroke="#3d3d3d" stroke-width="1.100"/><path d="M465.800 191.800l1.800 1.600l-1.800 1.600zM461.200 195l-1.800 1.600l1.800 1.600z" fill="#3d3d3d"/>
<path transform="translate(0,.4)" d="M459.300 219.700l3.200-2.900v1.800c3 0 4.700 1.800 4.700 5c-.9-1.700-2.200-2.500-4.700-2.500v1.800z" fill="#3d3d3d"/>
<g fill="#a9abad" transform="translate(0,.8)"><rect x="460" y="243.800" width="1.500" height="1.500"/><rect x="462.800" y="243.800" width="1.500" height="1.500"/><rect x="465.600" y="243.800" width="1.500" height="1.500"/><rect x="460" y="247" width="1.500" height="1.500"/><rect x="465.600" y="247" width="1.500" height="1.500"/></g>
<g transform="translate(0,1.100)"><circle cx="463.500" cy="271.900" r="3.300" fill="none" stroke="#fff" stroke-width="1.100"/><path d="M462.200 270.600l2.600 2.600M464.800 270.600l-2.600 2.600" stroke="#fff" stroke-width="0.900"/></g>
<rect x="460.400" y="305.300" width="6.600" height="4.800" fill="none" stroke="#9a9c9e" stroke-width="0.800"/><rect x="463.800" y="305.300" width="3.200" height="2" fill="#9a9c9e"/>
<g fill="#77797b"><rect x="461.0" y="331.3" width="1.300" height="1.500"/><rect x="462.9" y="331.3" width="1.300" height="1.500"/><rect x="464.8" y="331.3" width="1.300" height="1.500"/><rect x="461.0" y="333.3" width="1.300" height="1.500"/><rect x="462.9" y="333.3" width="1.300" height="1.500"/><rect x="464.8" y="333.3" width="1.300" height="1.500"/><rect x="461.0" y="335.3" width="1.300" height="1.500"/><rect x="462.9" y="335.3" width="1.300" height="1.500"/><rect x="464.8" y="335.3" width="1.300" height="1.500"/></g>
<path d="M459.600 359.900q3.900-4.200 7.800 0q-3.900 4.200-7.800 0z" fill="#7d7f81"/><circle cx="463.500" cy="359.900" r="1.200" fill="#e0e1e2"/>
</svg>
<svg style="left:0;top:0" width="1024" height="537" viewBox="0 0 1024 537"><rect x="451.15" y="301.95" width="159.8" height="223.5" fill="none" stroke="#ff0000" stroke-width="2.7"/></svg>
<svg style="left:0;top:0" width="1024" height="537" viewBox="0 0 1024 537">
<circle cx="990.2" cy="488.300" r="26" fill="rgba(0,0,0,.035)"/><circle cx="990.2" cy="488" r="24.300" fill="rgba(0,0,0,.04)"/>
<circle cx="990.2" cy="487.600" r="22.700" fill="#2184d1"/>
<path d="M979.300 478.200a2.600 2.600 0 0 1 2.600-2.600h16.200a2.600 2.600 0 0 1 2.600 2.600v21.200l-3.600-1.800h-15.200a2.600 2.600 0 0 1-2.600-2.600z" fill="#fff"/>
<path d="M982.600 490.600q7.600 5 15.200 0" fill="none" stroke="#2184d1" stroke-width="1.300" stroke-linecap="round"/>
</svg>
<div class="a" style="left:0;top:534px;width:1024px;height:3px;background:#1c2a40"></div>
</body></html>
